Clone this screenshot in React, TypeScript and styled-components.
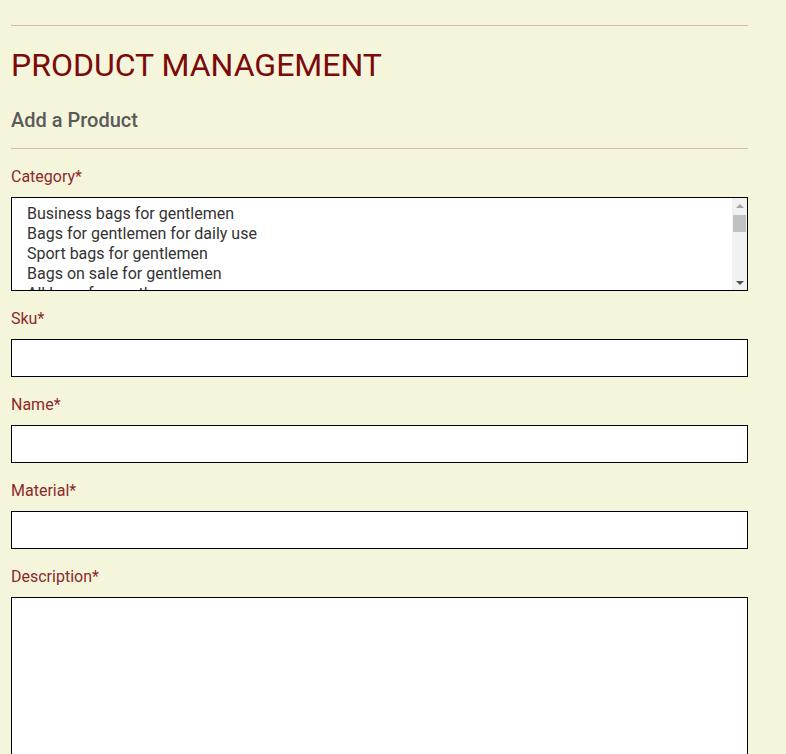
import styled, { createGlobalStyle } from "styled-components";

const GlobalStyle = createGlobalStyle`
    html, body {
        margin: 0;
        padding: 0;
        background: #f5f5dc;
        font-family: Roboto, "Liberation Sans", sans-serif;
    }
`

const Page = styled.div`
    width: 737px;
    padding: 25px 11px 0;
    overflow: hidden;
    height: 729px;
`

const Rule = styled.hr`
    border: 0;
    border-top: 1px solid #d8bca8;
    margin: 0;
`

const Title = styled.h1`
    font: 400 32px Roboto, sans-serif;
    color: #7b0a0a;
    margin: 21px 0 0;
    line-height: 36px;
`

const SubTitle = styled.h2`
    font: 500 20px Roboto, sans-serif;
    color: #5a5a5a;
    margin: 25px 0 16px;
    line-height: 24px;
`

const Form = styled.form`
    padding-top: 16px;
`

const Group = styled.div`
    margin-bottom: 16px;
`

const Label = styled.label`
    display: block;
    font: 400 16px Roboto, sans-serif;
    line-height: 24px;
    color: #8b2a2a;
    margin-bottom: 8px;
`

const ListBox = styled.div`
    display: flex;
    box-sizing: border-box;
    height: 94px;
    border: 1px solid #000;
    background: #fff;
    overflow: hidden;
`

const Select = styled.select`
    flex: 1;
    display: block;
    height: 100%;
    border: 0;
    border-radius: 0;
    background: #fff;
    padding: 6px 0 0 14px;
    font: 400 16px Roboto, sans-serif;
    color: #333;
    outline: none;
    overflow: hidden;
    scrollbar-width: none;
    option {
        padding: 0 1px;
        line-height: 20px;
        min-height: 20px;
    }
`

const ScrollTrack = styled.div`
    width: 15px;
    background: #f1f1f1;
    display: flex;
    flex-direction: column;
    align-items: center;
`

const ArrowButton = styled.div<{ $down?: boolean; $color: string }>`
    width: 15px;
    height: 15px;
    display: flex;
    align-items: center;
    justify-content: center;
    &::after {
        content: "";
        width: 0;
        height: 0;
        border-left: 4px solid transparent;
        border-right: 4px solid transparent;
        ${(p) => (p.$down ? `border-top: 4px solid ${p.$color};` : `border-bottom: 4px solid ${p.$color};`)}
    }
`

const Thumb = styled.div`
    width: 13px;
    height: 17px;
    margin-top: 2px;
    background: #c1c1c1;
`

const Spacer = styled.div`
    flex: 1;
`

const Input = styled.input`
    display: block;
    box-sizing: border-box;
    width: 100%;
    height: 38px;
    border: 1px solid #000;
    border-radius: 0;
    background: #fff;
    padding: 0 12px;
    font: 400 16px Roboto, sans-serif;
`

const TextArea = styled.textarea`
    display: block;
    box-sizing: border-box;
    width: 100%;
    height: 200px;
    border: 1px solid #000;
    border-radius: 0;
    background: #fff;
    resize: none;
    font: 400 16px Roboto, sans-serif;
`

const categories = [
    "Business bags for gentlemen",
    "Bags for gentlemen for daily use",
    "Sport bags for gentlemen",
    "Bags on sale for gentlemen",
    "All bags for gentlemen",
    "Business bags for ladies",
    "Bags for ladies for daily use",
    "Sport bags for ladies",
    "Bags on sale for ladies",
    "All bags for ladies",
    "Wallets for gentlemen",
    "Wallets for ladies",
    "Belts for gentlemen",
    "Belts for ladies",
    "Accessories",
    "New arrivals",
    "All products",
]

const fields = ["Sku", "Name", "Material"]

export default function App() {
    return (
        <>
            <GlobalStyle />
            <Page>
                <Rule />
                <Title>PRODUCT MANAGEMENT</Title>
                <SubTitle>Add a Product</SubTitle>
                <Rule />
                <Form>
                    <Group>
                        <Label>Category*</Label>
                        <ListBox>
                            <Select multiple>
                                {categories.map((c) => (
                                    <option key={c}>{c}</option>
                                ))}
                            </Select>
                            <ScrollTrack>
                                <ArrowButton $color="#a3a3a3" />
                                <Thumb />
                                <Spacer />
                                <ArrowButton $down $color="#505050" />
                            </ScrollTrack>
                        </ListBox>
                    </Group>
                    {fields.map((f) => (
                        <Group key={f}>
                            <Label>{f}*</Label>
                            <Input type="text" />
                        </Group>
                    ))}
                    <Group>
                        <Label>Description*</Label>
                        <TextArea />
                    </Group>
                </Form>
            </Page>
        </>
    )
}
